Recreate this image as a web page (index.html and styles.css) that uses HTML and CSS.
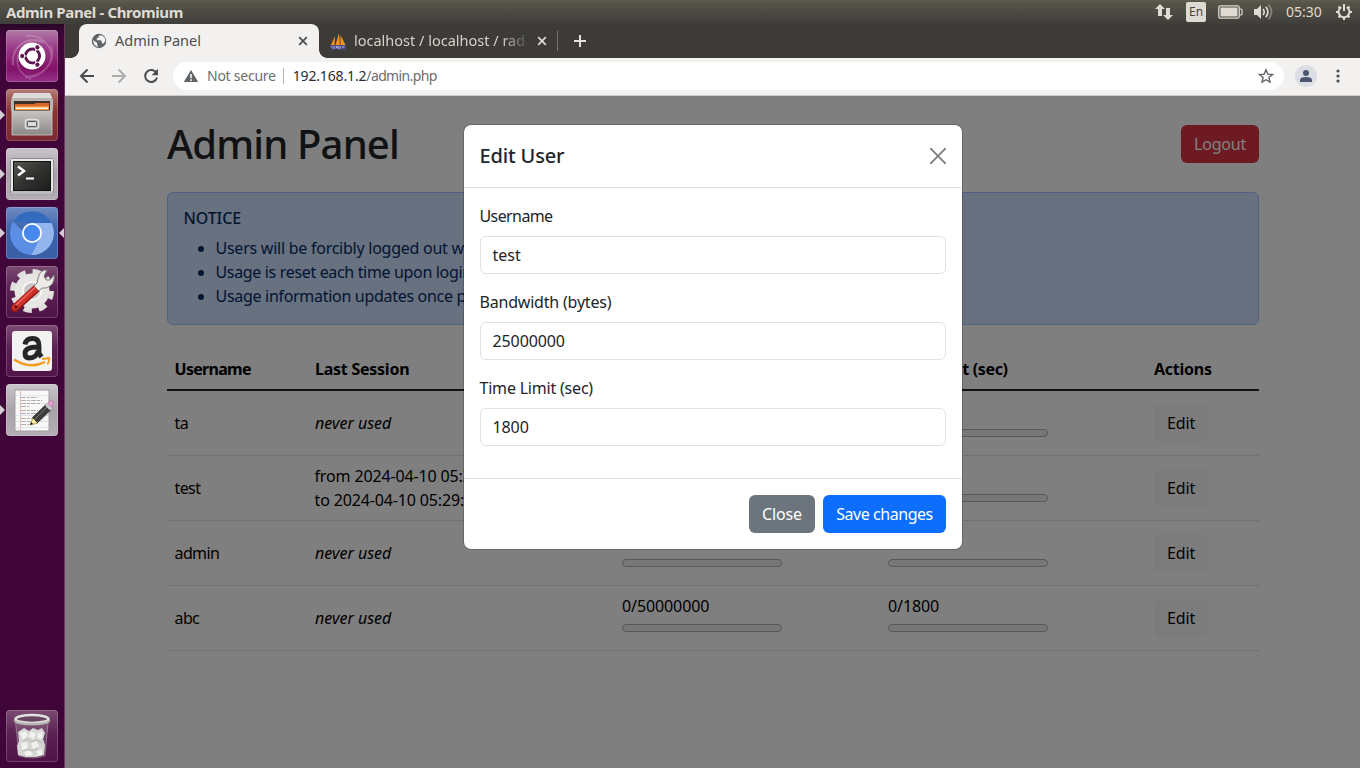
FILE: index.html
```html
<!DOCTYPE html>
<html lang="en">
<head>
<meta charset="utf-8">
<title>Admin Panel</title>
<link rel="stylesheet" href="styles.css">
</head>
<body>
<div class="desktop">
  <header class="panel">
    <span class="panel-title">Admin Panel - Chromium</span>
    <div class="indicators">
      <svg class="ind-net" width="18" height="18" viewBox="0 0 18 18"><path fill="#dfdbd2" d="M5 1l5 5H7v7H3V6H0zM13 17l-5-5h3V5h4v7h3z"/></svg>
      <span class="ind-lang">En</span>
      <svg class="ind-battery" width="25" height="14" viewBox="0 0 25 14"><rect x=".8" y=".8" width="20.400" height="12.400" rx="1.800" fill="none" stroke="#dfdbd2" stroke-width="1.300"/><rect x="2.500" y="2.500" width="17" height="9" fill="#dfdbd2"/><path d="M21.500 4h1.500q1 0 1 1v4q0 1-1 1h-1.500" fill="none" stroke="#dfdbd2" stroke-width="1.200"/></svg>
      <svg class="ind-sound" width="21" height="18" viewBox="0 0 21 18"><path fill="#dfdbd2" d="M1 6h3l4-4v14l-4-4H1z"/><g fill="none" stroke="#dfdbd2" stroke-width="1.700"><path d="M10 6q2.400 3 0 6"/><path d="M12.800 3.800q4.200 5.200 0 10.400"/><path d="M15.500 1.800q6 7.200 0 14.400" opacity=".4"/></g></svg>
      <span class="clock">05:30</span>
      <svg class="ind-gear" width="18" height="18" viewBox="0 0 18 18"><g fill="none" stroke="#dfdbd2"><path d="M6.200 4.200a5.400 5.400 0 1 0 5.600 0" stroke-width="2"/><path d="M9 1v7" stroke-width="2"/><path d="M3.600 3.600l1.500 1.500M14.400 3.600l-1.500 1.500M1 9h2.500M14.500 9H17M3.600 14.400l1.500-1.500M14.400 14.400l-1.500-1.500M9 14.500V17" stroke-width="2.200"/></g></svg>
    </div>
  </header>

  <div class="workspace">
    <nav class="launcher">
      <div class="app app-dash">
        <svg width="52" height="52" viewBox="0 0 52 52">
          <g fill="none" stroke="#fff" opacity=".22"><path d="M7 35C5 16 21 6 38 12" stroke-width="2"/><path d="M45 16c5 17-8 31-26 31" stroke-width="2"/><path d="M20 6c17-2 27 11 25 25" stroke-width="1.500"/><path d="M12 25c-3 13 4 20 13 24" stroke-width="1.500"/></g>
          <circle cx="26" cy="26.500" r="14" fill="#5c0a4c" opacity=".45"/>
          <circle cx="26" cy="26" r="13.500" fill="#fff"/>
          <circle cx="26.500" cy="26" r="7" fill="none" stroke="#60144f" stroke-width="3"/>
          <g stroke="#fff" stroke-width="1.200"><path d="M26.500 26L16 26M26.500 26l5.500-9.500M26.500 26l5.500 9.500" /></g>
          <circle cx="26.500" cy="26" r="5.300" fill="#fff"/>
          <g fill="#60144f" stroke="#fff"><circle cx="16.200" cy="26" r="2.600"/><circle cx="31.400" cy="17.300" r="2.600"/><circle cx="31.400" cy="34.700" r="2.600"/></g>
        </svg>
      </div>
      <div class="app app-files running">
        <svg width="52" height="52" viewBox="0 0 52 52">
          <defs><linearGradient id="cab" x2="0" y2="1"><stop stop-color="#c6c4c2"/><stop offset="1" stop-color="#898785"/></linearGradient></defs>
          <path d="M8 4h36l3 7v11H5V11z" fill="#b8b6b3"/><path d="M8 4h36l2 5H6z" fill="#dddbd8"/>
          <path d="M8 12h36v10H8z" fill="#3d302b"/>
          <path d="M9 15h19l2-1h13v6H9z" fill="#d9662a"/><path d="M9 17h34v4H9z" fill="#f0953f"/><path d="M10 18.500h32v1.500H10z" fill="#fff3df"/>
          <path d="M6 22h40v24H6z" fill="url(#cab)" stroke="#cfcdcb" stroke-width=".8"/>
          <rect x="19.500" y="30.500" width="13" height="9" rx="2" fill="#a5a3a1" stroke="#e2e0de" stroke-width="1.500"/><rect x="21.500" y="32.500" width="9" height="5" rx="1" fill="#dedcda" stroke="#555"/>
        </svg>
      </div>
      <div class="app app-term running">
        <svg width="52" height="52" viewBox="0 0 52 52">
          <defs><linearGradient id="scr" x2="1" y2="1"><stop stop-color="#555753"/><stop offset=".5" stop-color="#30322f"/><stop offset="1" stop-color="#1d1e1c"/></linearGradient></defs>
          <rect x="4.500" y="10.500" width="43" height="36" rx="1" fill="#e8e8e7" stroke="#8e8b8e"/><path d="M5 43h42v3.500H5z" fill="#bbb"/>
          <rect x="7.500" y="13.500" width="37" height="29" fill="url(#scr)" stroke="#111"/>
          <path d="M12 18.500l6 4.500-6 4.500" fill="none" stroke="#fff" stroke-width="2.400"/><path d="M20 30.500h8" stroke="#fff" stroke-width="2"/>
        </svg>
      </div>
      <div class="app app-chromium running focused">
        <svg width="52" height="52" viewBox="0 0 52 52">
          <path d="M7 15A22 22 0 0 1 45.500 16H26z" fill="#356bbf"/>
          <path d="M26 16h19.500A22 22 0 0 1 25 48l9.500-18z" fill="#92b5ed"/>
          <path d="M7 15A22 22 0 0 0 25 48l8-15-6-17-10 8z" fill="#5b8ee4"/>
          <circle cx="26" cy="26" r="10" fill="#fff"/><circle cx="26" cy="26" r="8.200" fill="#4887ee"/>
        </svg>
      </div>
      <div class="app app-plain">
        <svg width="52" height="52" viewBox="0 0 52 52">
          <circle cx="26" cy="25" r="19.500" fill="none" stroke="#e0dfdd" stroke-width="5" stroke-dasharray="8.200 7.117"/>
          <circle cx="26" cy="25" r="17.500" fill="#e6e5e3"/><circle cx="26" cy="25" r="9" fill="#c8c6c4" stroke="#f7f7f7" stroke-width="2"/>
          <path d="M9 42L31 22" stroke="#8f1511" stroke-width="8" stroke-linecap="round"/><path d="M9 41.500L31 21.500" stroke="#cf3029" stroke-width="6" stroke-linecap="round"/><path d="M10 39L29 21.500" stroke="#ec7067" stroke-width="1.200"/>
          <path d="M31 17l2-8q2-5 8-5l-3 6 2 4 4 0 4-5q1 7-4 11-4 3-8 2l-3 3-5-5z" fill="#ecebe9" stroke="#85827e"/>
          <circle cx="10" cy="41" r="1.500" fill="#551010"/>
        </svg>
      </div>
      <div class="app app-plain">
        <svg width="52" height="52" viewBox="0 0 52 52">
          <rect x="6" y="6" width="40" height="40" rx="3" fill="#f2f2f2"/>
          <path d="M19 19.500q1-6 7.500-6 6.500 0 6.500 7v8l2.500 3.500M32 22q-13 0-13 6.500 0 4.500 4.500 4.500 7 0 8.500-7" fill="none" stroke="#252525" stroke-width="4.800"/>
          <path d="M8 34.500q16 10 31 2.500" fill="none" stroke="#f79a1c" stroke-width="2.400"/><path d="M36 34l7-1q1 1-1.500 6.500" fill="none" stroke="#f79a1c" stroke-width="1.800"/>
        </svg>
      </div>
      <div class="app app-gedit running">
        <svg width="52" height="52" viewBox="0 0 52 52">
          <rect x="9" y="6" width="34" height="41" fill="#f8f8f6" stroke="#a3a0a3"/><path d="M14.500 6v40" stroke="#eab5b5"/>
          <path d="M10 11.500h32M10 31.500h32M10 43.500h32M10 37.500h32M10 19.500h32" stroke="#dbe6f1"/>
          <path d="M15 13.500h17M15 16.500h21M15 19.500h19M15 22.500h8M15 26.500h17M15 29.500h22M15 34.500h21M15 37.500h16M15 40.500h8" stroke="#b0b0b0" stroke-dasharray="5 1 3 1"/>
          <path d="M25 41l4-8 12-11 5 5-12 11z" fill="#777" opacity=".3"/>
          <path d="M24 41l3-7 5 5z" fill="#f2e79a" stroke="#8a8440" stroke-width=".7"/><path d="M24 41l1-3 2 2z" fill="#111"/>
          <path d="M26.500 33.500L40 20.500l5 5L31.500 38.500z" fill="#3d3d3d" stroke="#1f1f1f" stroke-width=".7"/><path d="M28.500 35.500l13-13" stroke="#777"/>
          <path d="M39 21.500l2.500-2 5 4.500-2.500 2.500z" fill="#c9c9c9"/><path d="M41.500 19l2.500-2q3-1 3.500 2.500l-1.500 4z" fill="#e3a3cd" stroke="#a86b95" stroke-width=".6"/>
        </svg>
      </div>
      <div class="app app-plain app-trash">
        <svg width="52" height="52" viewBox="0 0 52 52">
          <path d="M9 10l4 36q13 4 26 0l4-36z" fill="#eee" opacity=".17"/><path d="M9.500 12l3.500 34q13 4 26 0l3-34" fill="none" stroke="#ccc" stroke-width=".7" opacity=".5"/>
          <path d="M12 22l6-4 5 3 4-3 5 2 4-2 3 5-2 6 2 6-1 10-8 2h-10l-8-2-1-9 2-5z" fill="#d6d6d4"/>
          <path d="M14 23l6-2 2 5-5 4zM24 22l6 1-2 6-5-2zM32 23l5-1-1 7-5-1zM15 33l6-1 1 6-6 3zM25 33l6-2 2 6-6 2zM18 42l7-2 2 5-7 1zM31 41l5-2v6l-5 1z" fill="#f1f1ef"/><path d="M17 31l5-2 3 3 6-2 5 3M16 41l6-2 4 2 6-3" fill="none" stroke="#b4b4b1"/>
          <ellipse cx="26" cy="9" rx="16.500" ry="4" fill="#6a4562" stroke="#e2e2e0" stroke-width="2.500"/><path d="M9 10q0 4 17 4t17-4" fill="none" stroke="#b7b7b4" stroke-width="2.500"/>
        </svg>
      </div>
    </nav>

    <main class="browser">
      <div class="tabstrip">
        <div class="tab tab-active">
          <svg class="favicon" width="16" height="16" viewBox="0 0 16 16"><circle cx="8" cy="8" r="7.200" fill="#5f6368"/><path d="M9.800 2.300q-3 .5-2 2l-2 1v2h4l1 1.500v1.500l1.500.4 2-2.700A5.800 5.800 0 0 0 9.800 2.300zM2.200 7l4 3v2l1.500 1.800A5.800 5.800 0 0 1 2.200 7z" fill="#f2f1f0"/></svg>
          <span class="tab-title">Admin Panel</span>
          <svg class="tab-close" width="10" height="10" viewBox="0 0 10 10"><path d="M1.200 1.200l7.600 7.600M8.800 1.200L1.200 8.800" stroke="#4a4b4d" stroke-width="1.700"/></svg>
        </div>
        <div class="tab tab-idle">
          <svg class="favicon" width="17" height="17" viewBox="0 0 17 17"><path d="M1 12L5 3l-.5 9zM5.500 12L9 0l1 12zM10.500 12V2l5 10z" fill="#f6921e"/><path d="M0 12h16l-1 4.500H1z" fill="#4c4c87"/><path d="M1 14h1.500M4 13v3M6 13l1 2 1-2v3M10 13v3M12 14h2.500" stroke="#b3b3dd" fill="none"/></svg>
          <span class="tab-title tab-title-fade">localhost / localhost / rad</span>
          <svg class="tab-close" width="10" height="10" viewBox="0 0 10 10"><path d="M1.200 1.200l7.600 7.600M8.800 1.200L1.200 8.800" stroke="#dfdbd2" stroke-width="1.700"/></svg>
        </div>
        <span class="tab-divider"></span>
        <svg class="new-tab" width="14" height="14" viewBox="0 0 14 14"><path d="M7 1v12M1 7h12" stroke="#e4e1dc" stroke-width="2"/></svg>
      </div>

      <div class="toolbar">
        <svg width="16" height="16" viewBox="0 0 16 16"><path d="M15 8H2.500M8.500 1.500L2 8l6.500 6.500" fill="none" stroke="#4b4c4e" stroke-width="2"/></svg>
        <svg width="16" height="16" viewBox="0 0 16 16"><path d="M1 8h12.500M7.500 1.500L14 8l-6.500 6.500" fill="none" stroke="#adadac" stroke-width="2"/></svg>
        <svg width="16" height="16" viewBox="0 0 16 16"><path d="M13.400 5A6 6 0 1 0 14 9.500" fill="none" stroke="#4b4c4e" stroke-width="2"/><path d="M15 .8v6.400H8.600z" fill="#4b4c4e"/></svg>
        <div class="omnibox">
          <svg width="16" height="14" viewBox="0 0 16 14"><path d="M8 1l7.200 12H.8z" fill="#5f6368"/><path d="M8 5v4.200M8 10.200v1.800" stroke="#fff" stroke-width="1.500"/></svg>
          <span class="secure">Not secure</span>
          <span class="omni-divider"></span>
          <span class="url"><span class="host">192.168.1.2</span><span class="path">/admin.php</span></span>
          <svg class="star" width="16" height="16" viewBox="0 0 16 16"><path d="M8 1.800l1.800 4.300 4.700.4-3.600 3 1.100 4.600L8 11.700l-4 2.400 1.100-4.600-3.600-3 4.700-.4z" fill="none" stroke="#5f6368" stroke-width="1.400"/></svg>
        </div>
        <span class="profile"><svg width="14" height="14" viewBox="0 0 14 14"><circle cx="7" cy="4" r="3" fill="#4c5670"/><path d="M1 13v-2q0-3 6-3t6 3v2z" fill="#4c5670"/></svg></span>
        <svg class="kebab" width="4" height="14" viewBox="0 0 4 14"><g fill="#4b4c4e"><circle cx="2" cy="2" r="1.600"/><circle cx="2" cy="7" r="1.600"/><circle cx="2" cy="12" r="1.600"/></g></svg>
      </div>

      <div class="viewport">
        <div class="page">
          <div class="page-head">
            <h1>Admin Panel</h1>
            <button class="btn btn-danger">Logout</button>
          </div>
          <section class="alert">
            <h2>NOTICE</h2>
            <ul>
              <li class="li-a">Users will be forcibly logged out when</li>
              <li class="li-b">Usage is reset each time upon login</li>
              <li class="li-c">Usage information updates once per</li>
            </ul>
          </section>
          <table class="users">
            <thead>
              <tr><th class="c-user">Username</th><th class="c-session">Last Session</th><th class="c-band">Bandwidth</th><th class="c-time">Time Limit (sec)</th><th class="c-act">Actions</th></tr>
            </thead>
            <tbody>
              <tr><td>ta</td><td><em>never used</em></td><td><div class="usage"><span>0/25000000</span><i class="meter"></i></div></td><td><div class="usage"><span>0/1800</span><i class="meter"></i></div></td><td><button class="btn btn-light">Edit</button></td></tr>
              <tr><td>test</td><td class="dates">from 2024-04-10 05:29:01<br>to 2024-04-10 05:29:31</td><td><div class="usage"><span>0/25000000</span><i class="meter"></i></div></td><td><div class="usage"><span>0/1800</span><i class="meter"></i></div></td><td><button class="btn btn-light">Edit</button></td></tr>
              <tr><td>admin</td><td><em>never used</em></td><td><div class="usage"><span>0/50000000</span><i class="meter"></i></div></td><td><div class="usage"><span>0/1800</span><i class="meter"></i></div></td><td><button class="btn btn-light">Edit</button></td></tr>
              <tr><td>abc</td><td><em>never used</em></td><td><div class="usage"><span>0/50000000</span><i class="meter"></i></div></td><td><div class="usage"><span>0/1800</span><i class="meter"></i></div></td><td><button class="btn btn-light">Edit</button></td></tr>
            </tbody>
          </table>
        </div>

        <div class="backdrop">
          <div class="modal">
            <div class="modal-header">
              <h3>Edit User</h3>
              <svg width="16" height="16" viewBox="0 0 16 16"><path d="M.7.7l14.600 14.600M15.300.7L.7 15.300" stroke="#7f7f7f" stroke-width="1.900" stroke-linecap="round"/></svg>
            </div>
            <div class="modal-body">
              <div class="field"><label class="l-user">Username</label><div class="input l-test">test</div></div>
              <div class="field"><label>Bandwidth (bytes)</label><div class="input">25000000</div></div>
              <div class="field"><label>Time Limit (sec)</label><div class="input">1800</div></div>
            </div>
            <div class="modal-footer">
              <button class="btn btn-secondary">Close</button>
              <button class="btn btn-primary">Save changes</button>
            </div>
          </div>
        </div>
      </div>
    </main>
  </div>
</div>
</body>
</html>
```
FILE: styles.css
```css
* { box-sizing: border-box; }
body { margin: 0; font-family: "Noto Sans", sans-serif; font-size: 16px; line-height: 24px; }
svg { display: block; flex: none; }
h1, h2, h3, ul { margin: 0; }

.desktop { width: 1360px; height: 768px; display: flex; flex-direction: column; overflow: hidden; background: #3c3b37; }

/* Top panel */
.panel { height: 24px; flex: none; display: flex; align-items: center; justify-content: space-between; padding: 0 7px 1px 6px; background: linear-gradient(#5f5d50, #56544a 3px, #3f3e3a); color: #dfdbd2; }
.panel-title { font-size: 15px; font-weight: 700; letter-spacing: -.38px; }
.indicators { display: flex; align-items: center; }
.ind-lang { width: 20px; height: 20px; margin: 0 12px 0 13px; border-radius: 2px; background: #dfdbd2; color: #45443f; font-size: 12px; line-height: 20px; text-align: center; }
.ind-sound { margin: 0 12px 0 10px; }
.clock { font-size: 14px; width: 36px; margin-right: 13px; }

.workspace { flex: 1; display: flex; min-height: 0; }

/* Launcher */
.launcher { width: 65px; flex: none; display: flex; flex-direction: column; gap: 7px; padding: 6px 0 6px 6px; background: linear-gradient(#2b0726, #40063a 12px); border-right: 1px solid #6f3468; }
.app { position: relative; width: 52px; height: 52px; flex: none; border-radius: 4px; box-shadow: inset 0 0 0 1px rgba(255,255,255,.18); }
.app-dash { background: linear-gradient(#b07ba6, #9b3a87 35%, #821268 75%, #97318a); }
.app-files { background: linear-gradient(#b77c78, #8c3532 40%, #7a2b31); }
.app-term, .app-gedit { background: linear-gradient(#cac4ca, #a9a2a9 50%, #b5aeb5); }
.app-chromium { background: linear-gradient(#6f8cc2, #3c62ac 45%, #3a5fa6); }
.app-plain { background: linear-gradient(#7b4b73, #5b2152 45%, #4f1447); }
.app-trash { margin-top: auto; }
.running::before { content: ""; position: absolute; left: -6px; top: 21px; border: 5px solid transparent; border-left-color: #d5cdd4; border-right: 0; }
.focused::after { content: ""; position: absolute; right: -6px; top: 21px; border: 5px solid transparent; border-right-color: #d5cdd4; border-left: 0; }

/* Browser chrome */
.browser { flex: 1; min-width: 0; display: flex; flex-direction: column; }
.tabstrip { height: 34px; flex: none; display: flex; align-items: center; padding-left: 14px; background: #3c3b37; font-size: 14.500px; }
.tab { height: 34px; display: flex; align-items: center; }
.tab-active { position: relative; width: 240px; padding: 0 11px 0 12px; border-radius: 8px 8px 0 0; background: #f2f1f0; color: #4c4d4f; }
.tab-active::before, .tab-active::after { content: ""; position: absolute; bottom: 0; width: 8px; height: 8px; }
.tab-active::before { left: -8px; background: radial-gradient(circle at 0 0, transparent 7.500px, #f2f1f0 8px); }
.tab-active::after { right: -8px; background: radial-gradient(circle at 100% 0, transparent 7.500px, #f2f1f0 8px); }
.tab-title { padding-bottom: 2px; }
.tab-active .tab-title { margin-left: 8px; flex: 1; }
.tab-idle { padding-left: 11px; color: #d6d2c9; }
.tab-title-fade { width: 172px; margin-left: 7px; white-space: nowrap; -webkit-mask-image: linear-gradient(90deg, #000 148px, transparent 176px); mask-image: linear-gradient(90deg, #000 148px, transparent 176px); }
.tab-idle .tab-close { margin-left: 11px; }
.tab-divider { width: 1px; height: 20px; margin-left: 10px; background: #75736e; }
.new-tab { margin-left: 15px; }

.toolbar { height: 38px; flex: none; display: flex; align-items: center; gap: 16px; padding: 0 20px 2px 14px; background: #f2f1f0; border-bottom: 1px solid #cfcecd; }
.omnibox { flex: 1; height: 28px; margin: 1px 0 0 -2px; display: flex; align-items: center; padding: 0 10px; border-radius: 14px; background: #fff; font-size: 14px; color: #6a6d71; }
.secure { margin-left: 8px; letter-spacing: -.25px; }
.omni-divider { width: 1px; height: 16px; margin: 0 9px 0 7px; background: #b5b6b8; }
.url { flex: 1; }
.host { color: #2b2c2e; letter-spacing: -.15px; }
.path { letter-spacing: -.64px; }
.profile { width: 22px; height: 22px; margin: 0 3px 0 -5px; display: grid; place-items: center; border-radius: 50%; background: #dbdfe4; }

/* Page */
.viewport { position: relative; flex: 1; min-height: 0; background: #fff; }
.page { padding: 24px 101px 0 102px; }
.page-head { display: flex; justify-content: space-between; align-items: center; height: 48px; }
h1 { margin-top: -1px; font-size: 40px; line-height: 48px; font-weight: 500; letter-spacing: -.85px; color: #212529; }
.btn { height: 38px; flex: none; padding: 0; border: 0; border-radius: 6px; font: inherit; white-space: nowrap; }
.btn-danger { width: 78px; background: #dc3545; color: #fff; letter-spacing: -.2px; }
.btn-light { width: 54px; display: block; background: #f8f9fa; color: #000; letter-spacing: -.1px; }
.alert { height: 133px; margin: 24px 0; padding: 16px 16px 16px 15.500px; border: 1px solid #9ec5fe; border-radius: 6px; background: #cfe2ff; color: #052c65; }
.alert h2 { margin-bottom: 8px; font-size: 16px; line-height: 19px; font-weight: 500; letter-spacing: -.12px; }
.alert ul { padding-left: 32px; }
.li-a { letter-spacing: -.25px; }
.li-b { letter-spacing: -.34px; }
.li-c { letter-spacing: -.3px; }
.users { width: 1092px; table-layout: fixed; border-collapse: separate; border-spacing: 0; color: #000; letter-spacing: -.1px; }
th { height: 42px; padding: 8px; text-align: left; font-weight: 700; border-bottom: 2px solid #212529; letter-spacing: -.25px; }
.c-user { width: 140px; letter-spacing: -.7px; }
.c-session { width: 307px; }
.c-band, .c-time { width: 266px; }
.c-time { letter-spacing: -.35px; }
td { height: 65px; padding: 8px; vertical-align: middle; border-bottom: 1px solid #dee2e6; }
td:first-child, th:first-child { padding-left: 7.500px; }
td:first-child { letter-spacing: -.6px; }
td.dates { letter-spacing: -.14px; padding-left: 7.500px; }
em { letter-spacing: 0; }
.usage span { display: block; }
.meter { display: block; width: 160px; height: 8px; margin: 6px 0 10px; border: 1px solid #b0b0b0; border-radius: 4px; background: #efefef; }

/* Modal */
.backdrop { position: absolute; inset: 0; padding: 28px 0 0 398px; background: rgba(0,0,0,.5); }
.modal { width: 500px; border: 1px solid rgba(0,0,0,.175); border-radius: 8px; background: #fff; background-clip: padding-box; color: #212529; }
.modal-header { height: 63px; display: flex; align-items: center; justify-content: space-between; padding: 0 16px 0 15.500px; border-bottom: 1px solid #dee2e6; }
.modal-header h3 { font-size: 20px; line-height: 30px; font-weight: 500; letter-spacing: -.15px; }
.modal-body { padding: 16px; }
.field { margin-bottom: 16px; }
.field label { display: block; margin: 0 0 8px -.5px; letter-spacing: -.2px; }
.field .l-user { letter-spacing: -.6px; }
.input { height: 38px; padding: 6px 11.500px; border: 1px solid #dee2e6; border-radius: 6px; letter-spacing: -.1px; }
.input.l-test { letter-spacing: 0; }
.modal-footer { height: 71px; display: flex; align-items: center; justify-content: flex-end; gap: 8px; padding: 0 16px; border-top: 1px solid #dee2e6; }
.btn-secondary { width: 66px; background: #6c757d; color: #fff; letter-spacing: -.1px; }
.btn-primary { width: 123px; background: #0d6efd; color: #fff; letter-spacing: -.45px; }
```
